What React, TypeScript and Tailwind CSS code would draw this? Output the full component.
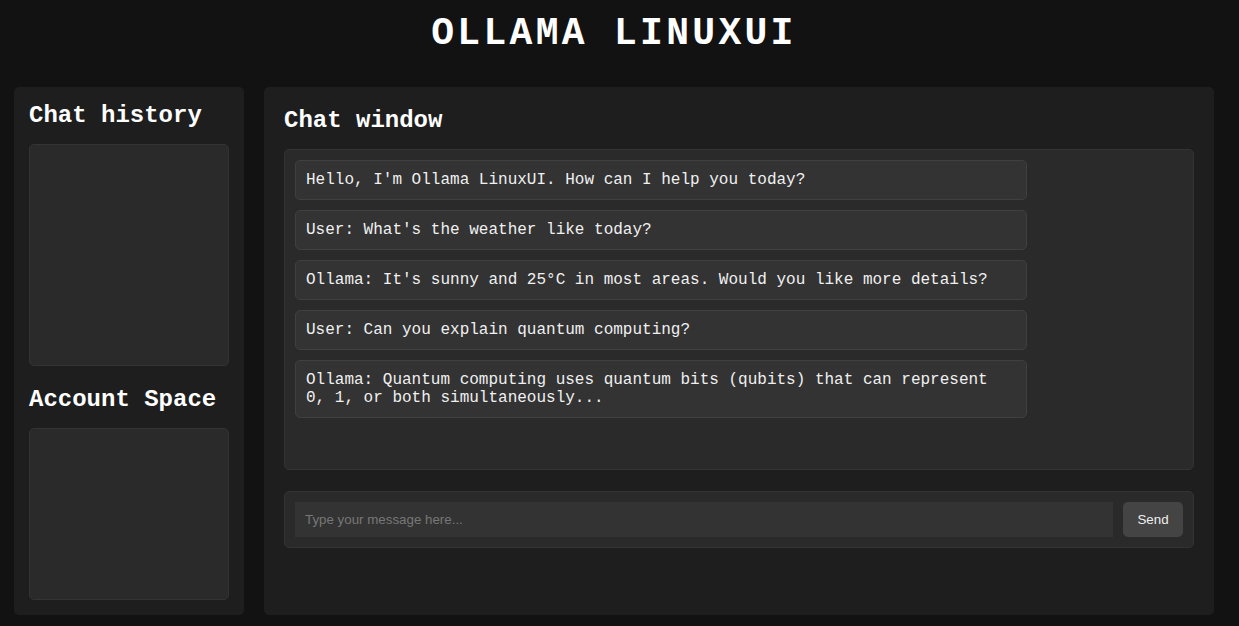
import React from 'react'

const messages = [
  "Hello, I'm Ollama LinuxUI. How can I help you today?",
  "User: What's the weather like today?",
  "Ollama: It's sunny and 25°C in most areas. Would you like more details?",
  'User: Can you explain quantum computing?',
  'Ollama: Quantum computing uses quantum bits (qubits) that can represent 0, 1, or both simultaneously...',
]

const App = () => {
  return (
    <div className="min-h-screen bg-[#121212] text-white font-['Liberation_Mono',monospace] pl-[14px] pr-[25px]">
      {/* header */}
      <h1 className="pt-[12px] text-center text-[38px] leading-[43px] font-bold tracking-[3.3px]">OLLAMA LINUXUI</h1>

      <div className="flex gap-[20px] mt-[32px]">
        {/* sidebar */}
        <div className="flex flex-col w-[230px] h-[528px] bg-[#1e1e1e] rounded-[5px] px-[15px] pt-[15px] pb-[15px]">
          <h2 className="text-[24px] leading-[27px] font-bold">Chat history</h2>
          <div className="mt-[15px] h-[222px] bg-[#2a2a2a] border border-[#333] rounded-[5px]"></div>
          <h2 className="mt-[20px] text-[24px] leading-[27px] font-bold">Account Space</h2>
          <div className="mt-[15px] h-[172px] bg-[#2a2a2a] border border-[#333] rounded-[5px]"></div>
        </div>

        {/* chat window */}
        <div className="flex flex-col w-[950px] h-[528px] bg-[#1e1e1e] rounded-[5px] px-[20px] pt-[20px]">
          <h2 className="text-[24px] leading-[27px] font-bold">Chat window</h2>
          <div className="mt-[15px] h-[321px] bg-[#2a2a2a] border border-[#333] rounded-[5px] p-[10px] flex flex-col gap-[10px]">
            {messages.map((m, i) => (
              <div key={i} className="w-[732px] bg-[#333] border border-[#404040] rounded-[5px] px-[10px] py-[10px] text-[16px] leading-[18px] text-[#f0f0f0]">
                {m}
              </div>
            ))}
          </div>

          <div className="mt-[21px] h-[57px] bg-[#2a2a2a] border border-[#333] rounded-[5px] p-[10px] flex gap-[10px]">
            <input
              type="text"
              placeholder="Type your message here..."
              className="min-w-0 flex-1 h-[35px] bg-[#333] px-[10px] text-[13.33px] text-white font-['Liberation_Sans',Arial,sans-serif] placeholder:text-[#777] outline-none"
            />
            <button className="shrink-0 w-[60px] h-[35px] bg-[#444] rounded-[5px] text-[13.33px] text-[#eee] font-['Liberation_Sans',Arial,sans-serif]">
              Send
            </button>
          </div>
        </div>
      </div>
    </div>
  )
}

export default App
